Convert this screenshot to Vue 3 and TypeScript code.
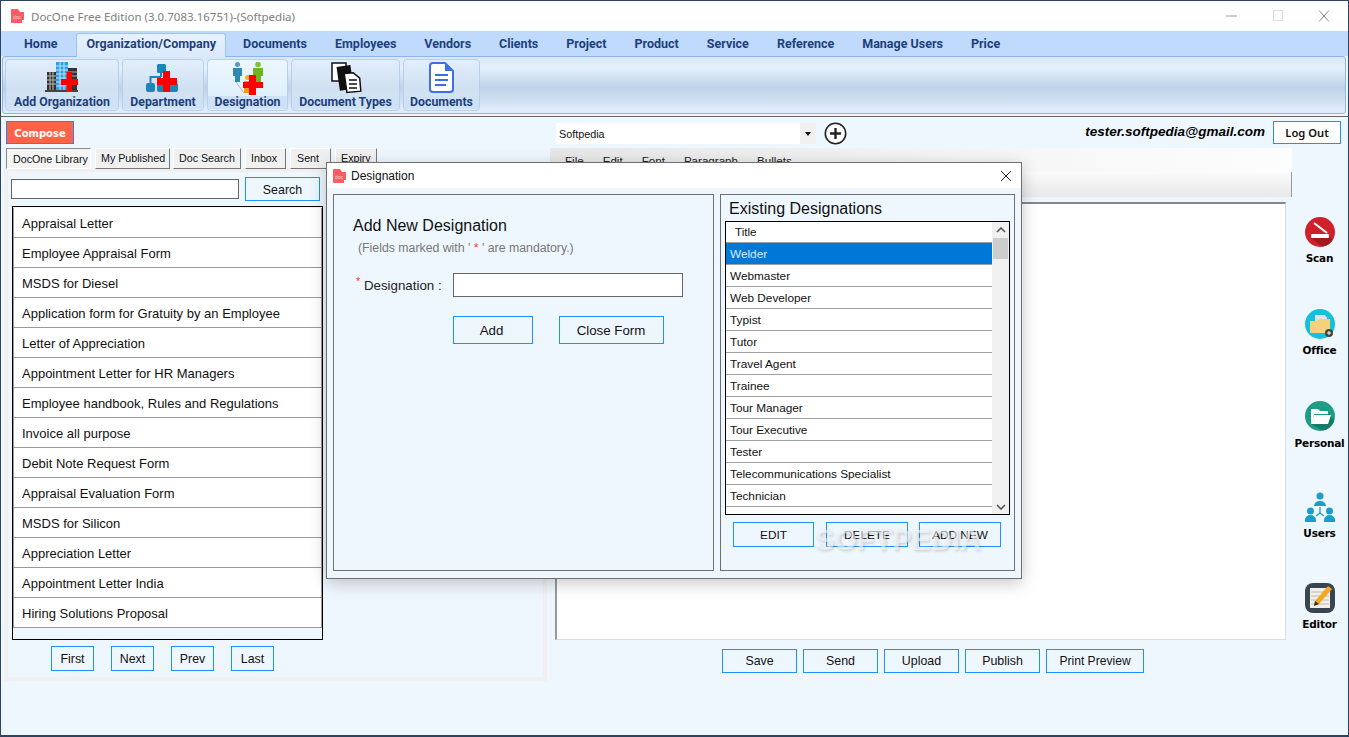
<script setup lang="ts">
const tabs = ['Home', 'Organization/Company', 'Documents', 'Employees', 'Vendors', 'Clients', 'Project', 'Product', 'Service', 'Reference', 'Manage Users', 'Price']
const libTabs = ['DocOne Library', 'My Published', 'Doc Search', 'Inbox', 'Sent', 'Expiry']
const docs = ['Appraisal Letter', 'Employee Appraisal Form', 'MSDS for Diesel', 'Application form for Gratuity by an Employee', 'Letter of Appreciation', 'Appointment Letter for HR Managers', 'Employee handbook, Rules and Regulations', 'Invoice all purpose', 'Debit Note Request Form', 'Appraisal Evaluation Form', 'MSDS for Silicon', 'Appreciation Letter', 'Appointment Letter India', 'Hiring Solutions Proposal']
const pager = ['First', 'Next', 'Prev', 'Last']
const actions = ['Save', 'Send', 'Upload', 'Publish', 'Print Preview']
const menus = ['File', 'Edit', 'Font', 'Paragraph', 'Bullets']
const titles = ['Welder', 'Webmaster', 'Web Developer', 'Typist', 'Tutor', 'Travel Agent', 'Trainee', 'Tour Manager', 'Tour Executive', 'Tester', 'Telecommunications Specialist', 'Technician', 'Technical Support Engineer']
</script>

<template>
  <div class="window">
    <header class="titlebar">
      <svg class="logo" viewBox="0 0 16 16"><path d="M3 1h6l2 3h4v8H13v3H3a1 1 0 0 1-1-1V2a1 1 0 0 1 1-1z" fill="#fb5c63" /><text x="4" y="10.5" font-size="5" fill="#ffd5d5" font-family="Liberation Sans">doc</text></svg>
      <span class="app-title">DocOne Free Edition (3.0.7083.16751)-(Softpedia)</span>
      <div class="win-controls">
        <svg width="12" height="12" viewBox="0 0 12 12"><path d="M0 6h11" stroke="#999" fill="none" /></svg>
        <svg width="12" height="12" viewBox="0 0 12 12"><rect x="1.5" y="0.5" width="9" height="10" stroke="#ddd" fill="none" /></svg>
        <svg width="12" height="12" viewBox="0 0 12 12"><path d="M1 0.5l10 11M11 0.5l-10 11" stroke="#888" fill="none" /></svg>
      </div>
    </header>

    <nav class="tabs">
      <span v-for="(t, i) in tabs" :key="t" class="tab" :class="{ active: i === 1 }">{{ t }}</span>
    </nav>

    <section class="ribbon">
      <button class="rb w114">
        <svg width="34" height="34" viewBox="0 0 34 34">
          <rect x="2" y="10" width="9" height="18" fill="#333" /><path d="M2 14h9M2 18h9M2 22h9M5 10v18M8 10v18" stroke="#bbb" />
          <rect x="23" y="6" width="9" height="22" fill="#333" /><path d="M23 10h9M23 14h9" stroke="#aaa" />
          <rect x="11" y="0" width="12" height="28" fill="#2c9fe8" /><path d="M11 4h12M11 8h12M11 12h12M11 16h12M11 20h12M11 24h12M15 0v28M19 0v28" stroke="#bfe4fb" />
          <rect x="0" y="28" width="33" height="2" fill="#444" />
          <path d="M21.500 10H27v7h6v6h-6v7h-5.500v-7H16v-6h5.500z" fill="#f00" />
        </svg>
        <span>Add Organization</span>
      </button>
      <button class="rb w82">
        <svg width="34" height="34" viewBox="0 0 34 34">
          <rect x="11" y="2" width="9" height="9" rx="1.500" fill="#1b86b8" />
          <path d="M15 10v5M4.500 22v-7H15" stroke="#1b86b8" stroke-width="2" fill="none" />
          <rect x="0" y="21" width="9" height="9" rx="2" fill="#1b86b8" /><rect x="11" y="21" width="10" height="9" rx="2" fill="#1b86b8" /><rect x="22" y="21" width="10" height="9" rx="2" fill="#1b86b8" />
          <path d="M17 9h7v7h7v7h-7v7h-7v-7h-6v-7h6z" fill="#f00" />
        </svg>
        <span>Department</span>
      </button>
      <button class="rb w81 hover">
        <svg width="34" height="34" viewBox="0 0 34 34">
          <circle cx="6.500" cy="2.500" r="2.500" fill="#4a9cc0" /><path d="M2 6h9v8H9v6H4v-6H2z" fill="#2d88b2" />
          <circle cx="27" cy="2.500" r="2.800" fill="#7dc22f" /><path d="M22 6h10v8h-2v6h-6v-6h-2z" fill="#6cb522" />
          <circle cx="16.500" cy="15.500" r="2.500" fill="#f5b51a" /><path d="M13 19h7v12h-7z" fill="#f39a16" />
          <path d="M5 20l8 11" stroke="#bbb" fill="none" />
          <path d="M18 13h7v7h7v6h-7v7h-7v-7h-6v-6h6z" fill="#f00" />
        </svg>
        <span>Designation</span>
      </button>
      <button class="rb w109">
        <svg width="34" height="34" viewBox="0 0 34 34">
          <rect x="3" y="1" width="14" height="18" fill="#fff" stroke="#111" stroke-width="1.500" />
          <rect x="9" y="4" width="14" height="24" fill="#111" transform="rotate(-8 15 15)" />
          <path d="M16 11h9l6 6v13H17z" fill="#fff" stroke="#111" stroke-width="1.500" transform="rotate(-5 22 20)" />
          <path d="M20 18h8M20 22h8M20 26h8" stroke="#111" stroke-width="1.500" />
        </svg>
        <span>Document Types</span>
      </button>
      <button class="rb w77">
        <svg width="34" height="34" viewBox="0 0 34 34">
          <path d="M8 1h12l8 8v18a3 3 0 0 1-3 3H8a3 3 0 0 1-3-3V4a3 3 0 0 1 3-3z" fill="#fff" stroke="#3e6fe3" stroke-width="2" />
          <path d="M20 1v8h8z" fill="#3e6fe3" />
          <path d="M10 13h13M10 18h13M10 23h11" stroke="#3e6fe3" stroke-width="2.200" />
        </svg>
        <span>Documents</span>
      </button>
    </section>

    <main class="body">
      <aside class="left">
        <button class="compose">Compose</button>
        <div class="lib-tabs">
          <span v-for="(t, i) in libTabs" :key="t" class="lib-tab" :class="{ on: i === 0 }">{{ t }}</span>
        </div>
        <div class="lib-panel">
          <div class="search-row">
            <input class="search-input" type="text" />
            <button class="btn search-btn">Search</button>
          </div>
          <ul class="doc-list">
            <li v-for="d in docs" :key="d">{{ d }}</li>
          </ul>
          <div class="pager">
            <button v-for="p in pager" :key="p" class="btn page-btn">{{ p }}</button>
          </div>
        </div>
      </aside>

      <div class="main">
        <div class="top-row">
          <div class="combo"><span>Softpedia</span><i class="combo-arrow"></i></div>
          <svg class="add-circle" width="23" height="23" viewBox="0 0 23 23"><circle cx="11.500" cy="11.500" r="10.200" fill="#fff" stroke="#222" stroke-width="1.600" /><path d="M11.500 6v11M6 11.500h11" stroke="#222" stroke-width="2.400" /></svg>
          <span class="email">tester.softpedia@gmail.com</span>
          <button class="btn logout">Log Out</button>
        </div>
        <div class="work">
          <div class="editor">
            <div class="menu-row"><span v-for="m in menus" :key="m">{{ m }}</span></div>
            <div class="tool-row"></div>
            <div class="sheet"></div>
            <div class="actions">
              <button v-for="a in actions" :key="a" class="btn act" :class="{ wide: a === 'Print Preview' }">{{ a }}</button>
            </div>
          </div>
          <div class="rail">
            <div class="rail-item">
              <svg width="32" height="32" viewBox="0 0 32 32"><defs><clipPath id="c1"><circle cx="16" cy="16" r="15" /></clipPath></defs><circle cx="16" cy="16" r="15" fill="#d0202a" /><path d="M7 22l4-2 14 0 8 8-8 8z" fill="#a5181f" clip-path="url(#c1)" /><path d="M10 7l13 10" stroke="#fff" stroke-width="2" /><rect x="7" y="18" width="18" height="4" rx="1" fill="#fff" /></svg>
              <span>Scan</span>
            </div>
            <div class="rail-item">
              <svg width="32" height="32" viewBox="0 0 32 32"><circle cx="16" cy="16" r="15" fill="#15c0da" /><path d="M11 7h10l2 3v8H11z" fill="#e3e3e3" /><path d="M6 13h6l2-2h12v14H6z" fill="#f4d27a" /><circle cx="25" cy="25" r="4" fill="#444" /><path d="M25 23v4M23 25h4" stroke="#fff" /></svg>
              <span>Office</span>
            </div>
            <div class="rail-item">
              <svg width="32" height="32" viewBox="0 0 32 32"><defs><clipPath id="c3"><circle cx="16" cy="16" r="15" /></clipPath></defs><circle cx="16" cy="16" r="15" fill="#1d9d86" /><path d="M7 24l18-10 8 10-8 10z" fill="#167a68" clip-path="url(#c3)" /><path d="M7 12V9h7l2 2h8v3H10l-2 9-1-1z" fill="#fff" /><path d="M10 15h17l-3 9H7z" fill="#fff" /></svg>
              <span>Personal</span>
            </div>
            <div class="rail-item">
              <svg width="32" height="32" viewBox="0 0 32 32" fill="#1a9fc4"><circle cx="16" cy="5" r="3.500" /><path d="M10 15a6 5 0 0 1 12 0z" /><circle cx="6.500" cy="20" r="3.500" /><path d="M1 31v-2a5.500 5 0 0 1 11 0v2z" /><circle cx="25.500" cy="20" r="3.500" /><path d="M20 31v-2a5.500 5 0 0 1 11 0v2z" /><path d="M16 16v6M16 22l-4 3M16 22l4 3" stroke="#1a9fc4" fill="none" stroke-width="1.300" /></svg>
              <span>Users</span>
            </div>
            <div class="rail-item">
              <svg width="32" height="32" viewBox="0 0 32 32"><rect x="1" y="1" width="30" height="30" rx="8" fill="#3a4450" /><rect x="6" y="6" width="20" height="20" fill="#f1efe6" /><path d="M7 10h18M7 14h18M7 18h18M7 22h18" stroke="#bbb" /><path d="M24 4l4 3-13 15-5 2 1-5z" fill="#f5a623" /><path d="M11 19l4 3-5 2z" fill="#333" /></svg>
              <span>Editor</span>
            </div>
          </div>
        </div>
      </div>
    </main>

    <div class="dialog">
      <header class="dlg-title">
        <svg class="logo small" viewBox="0 0 16 16"><path d="M3 1h6l2 3h4v8H13v3H3a1 1 0 0 1-1-1V2a1 1 0 0 1 1-1z" fill="#fb5c63" /><text x="4" y="10.5" font-size="5" fill="#ffd5d5" font-family="Liberation Sans">doc</text></svg>
        <span>Designation</span>
        <svg class="dlg-close" width="12" height="12" viewBox="0 0 12 12"><path d="M1 1l10 10M11 1L1 11" stroke="#222" fill="none" /></svg>
      </header>
      <div class="dlg-body">
        <section class="dlg-left">
          <h2>Add New Designation</h2>
          <p class="note">(Fields marked with ' <b>*</b> ' are mandatory.)</p>
          <div class="field">
            <label><sup>*</sup> Designation :</label>
            <input type="text" />
          </div>
          <div class="form-btns">
            <button class="btn add">Add</button>
            <button class="btn close">Close Form</button>
          </div>
        </section>
        <section class="dlg-right">
          <h2>Existing Designations</h2>
          <div class="grid">
            <div class="grid-rows">
              <div class="grid-head">Title</div>
              <div v-for="(t, i) in titles" :key="t" class="grid-row" :class="{ sel: i === 0 }">{{ t }}</div>
            </div>
            <div class="scroll">
              <svg width="10" height="6" viewBox="0 0 10 6"><path d="M1 5l4-4 4 4" stroke="#555" stroke-width="1.600" fill="none" /></svg>
              <i class="thumb"></i>
              <svg class="down" width="10" height="6" viewBox="0 0 10 6"><path d="M1 1l4 4 4-4" stroke="#555" stroke-width="1.600" fill="none" /></svg>
            </div>
          </div>
          <div class="grid-btns">
            <button class="btn">EDIT</button>
            <button class="btn">DELETE</button>
            <button class="btn">ADD NEW</button>
          </div>
        </section>
      </div>
    </div>
    <div class="watermark">SOFTPEDIA</div>
  </div>
</template>

<style>
html, body { margin: 0; background: #eff7fe; }
</style>

<style scoped>
* { box-sizing: border-box; }
.window {
  position: relative; width: 1349px; height: 737px; border: 1px solid #2b4464; border-bottom-width: 2px;
  display: flex; flex-direction: column; background: #eff7fe; overflow: hidden;
  font-family: "Liberation Sans", Arial, sans-serif; color: #111;
}
button { font-family: inherit; padding: 0; cursor: default; }
.titlebar { height: 30px; background: #fff; display: flex; align-items: center; padding-left: 8px; flex: none; }
.logo { width: 16px; height: 16px; }
.logo.small { width: 16px; height: 16px; }
.app-title { margin-left: 6px; font-size: 11.500px; color: #808080; font-family: "Noto Sans", sans-serif; }
.win-controls { margin-left: auto; display: flex; gap: 34px; padding-right: 18px; }
.tabs { height: 25px; background: #bfdafc; display: flex; flex: none; padding: 2px 0 0 9px; align-items: stretch; }
.tab { padding: 3px 14px 0; font: 700 12.500px Roboto, sans-serif; color: #1e3f7c; white-space: nowrap; }
.tab.active {
  background: linear-gradient(#e8f2fe, #dbe9fb); border: 1px solid #9fc3ee; border-bottom: 0; border-radius: 3px 3px 0 0;
  padding: 2px 9px 0; margin: 0 3px 0 5px; height: 24px; position: relative;
}
.ribbon {
  height: 58px; margin: 0 2px 0 1px; flex: none; display: flex; gap: 3px; padding: 2px 0 2px 2px;
  border: 1px solid #8fb4ea; border-radius: 3px;
  background: linear-gradient(#d7e7fb 0, #e5f0fd 20%, #bed2e8 55%, #dfecfb 95%);
}
.rb {
  height: 52px; border: 1px solid #b9d0ea; border-radius: 4px; display: flex; flex-direction: column; align-items: center;
  background: linear-gradient(#e3eefb 0, #cfe0f2 60%, #dfebf8 100%); justify-content: space-between; overflow: hidden;
}
.rb.hover { background: linear-gradient(#ecf6fe, #dbeefa); }
.rb svg { margin-top: 2px; flex: none; }
.rb span { display: block; width: 100%; height: 15px; margin-bottom: 1px; background: #cfe1f4; font: 700 12.300px/13px Roboto, sans-serif; color: #1e3f7c; white-space: nowrap; text-align: center; }
.w114 { width: 114px; } .w82 { width: 82px; } .w81 { width: 81px; } .w109 { width: 109px; } .w77 { width: 77px; }
.body { flex: 1; display: flex; min-height: 0; margin-top: 2px; border-top: 1px solid #666; }
.left { width: 546px; flex: none; padding: 4px 0 0 5px; }
.compose { display: block; width: 68px; height: 23px; border: 1px solid #1e8cf0; background: #ff6347; color: #fff; font: 700 10px "DejaVu Sans", sans-serif; padding-top: 1px; }
.lib-tabs { display: flex; gap: 4px; margin-top: 4px; height: 21px; position: relative; }
.lib-tab {
  background: #f0f0f0; height: 21px; padding: 0 5px; font-size: 10.700px; line-height: 19px; white-space: nowrap;
  border: 1px solid; border-color: #fff #777 #777 #fff;
}
.lib-tab:nth-child(1) { width: 85px; background: #f4f4f4; border-color: #888 #fff #fff #888; padding-left: 6px; line-height: 20px; }
.lib-tab:nth-child(2) { width: 75px; margin-left: 0; } .lib-tab:nth-child(3) { width: 68px; margin-left: -1px; }
.lib-tab:nth-child(4) { width: 41px; } .lib-tab:nth-child(5) { width: 41px; padding-left: 6px; } .lib-tab:nth-child(6) { width: 42px; }
.lib-panel { margin: -1px 0 0 -2px; width: 543px; height: 513px; border: 4px solid #f0f0f0; padding: 5px 3px 0; }
.search-row { display: flex; align-items: center; gap: 6px; }
.search-input { width: 228px; height: 20px; border: 1px solid #666; background: #fff; }
.search-btn { width: 75px; height: 24px; font-size: 12.300px; padding-top: 1px; }
.btn { background: transparent; border: 1px solid #1e90ff; color: #111; font-size: 12.400px; }
.doc-list { list-style: none; margin: 5px 0 0 1px; padding: 1px 0 0; width: 311px; height: 434px; border: 1px solid #000; overflow: hidden; }
.doc-list li { height: 30px; line-height: 31px; background: #fff; border-bottom: 1px solid #999; font-size: 13px; white-space: nowrap; border-left: 1px solid #999; border-right: 1px solid #999; padding-left: 8px; }
.pager { display: flex; gap: 17px; margin: 6px 0 0 40px; }
.page-btn { width: 43px; height: 25px; padding-top: 1px; }
.main { flex: 1; min-width: 0; display: flex; flex-direction: column; }
.top-row { height: 30px; flex: none; display: flex; align-items: flex-start; padding: 6px 7px 0 9px; }
.combo { width: 260px; height: 21px; background: #fff; display: flex; align-items: center; justify-content: space-between; font-size: 10.800px; padding-left: 3px; }
.combo-arrow { width: 16px; height: 21px; background: #f0f0f0; position: relative; }
.combo-arrow::after { content: ""; position: absolute; left: 5px; top: 9px; border: 3px solid transparent; border-top: 4px solid #111; border-bottom: 0; }
.add-circle { margin: -1px 0 0 8px; flex: none; }
.email { margin-left: auto; font: italic 700 13.500px "Liberation Sans", sans-serif; color: #000; margin-top: 1px; }
.logout { width: 68px; height: 23px; margin: -2px 0 0 8px; font-size: 11.200px; background: #fff; font-family: "Noto Sans", sans-serif; font-weight: 600; }
.work { flex: 1; display: flex; min-height: 0; padding-top: 1px; }
.editor { width: 745px; flex: none; padding-left: 3px; display: flex; flex-direction: column; }
.menu-row { height: 24px; flex: none; background: linear-gradient(90deg, #e7e7e7, #f4f4f4 50%, #fdfdfd); display: flex; gap: 19px; padding: 6px 0 0 15px; font-size: 11.600px; color: #222; }
.tool-row { height: 25px; flex: none; background: linear-gradient(#fbfbfb, #e8e8e8); border-right: 1px solid #999; }
.sheet { width: 731px; height: 438px; margin: 5px 0 0 5px; flex: none; background: #fff; border: 1px solid #ddd; border-left: 2px solid #999; border-top: 2px solid #888; }
.actions { display: flex; gap: 6px; margin: 9px 0 0 172px; }
.act { width: 75px; height: 24px; }
.act.wide { width: 98px; font-size: 12.100px; }
.rail { flex: 1; padding: 68px 1px 0 0; }
.rail-item { height: 91.500px; display: flex; flex-direction: column; align-items: center; }
.rail-item svg { width: 32px; height: 32px; flex: none; }
.rail-item span { font: 700 10.500px "DejaVu Sans", sans-serif; color: #000; margin-top: 4px; letter-spacing: -0.200px; }
.rail-item:nth-child(3) { padding-top: 1px; }
.rail-item:nth-child(3) span { margin-top: 5px; }
.dialog {
  position: absolute; left: 325px; top: 161px; width: 696px; height: 417px; background: #eff7fe; border: 1px solid #6f6f6f;
  box-shadow: 0 4px 16px rgba(0, 0, 0, 0.22); display: flex; flex-direction: column; z-index: 5;
}
.dlg-title { height: 25px; background: #fff; flex: none; display: flex; align-items: center; padding-left: 4px; font-size: 12px; color: #111; }
.dlg-title span { margin-left: 4px; }
.dlg-close { margin-left: auto; margin-right: 9px; }
.dlg-body { flex: 1; display: flex; gap: 6px; padding: 6px 6px 7px; }
.dlg-left { width: 381px; border: 1px solid #707070; padding: 21px 0 0 19px; }
.dlg-left h2, .dlg-right h2 { margin: 0; font-size: 16px; font-weight: 400; line-height: 19px; color: #111; }
.note { margin: 6px 0 0 5px; font-size: 12.300px; line-height: 14px; color: #777; }
.note b { color: #f33; font-weight: 400; }
.field { display: flex; align-items: center; margin-top: 18px; }
.field label { width: 100px; padding-left: 3px; font-size: 13.300px; color: #222; white-space: nowrap; }
.field sup { color: #f33; font-size: 11px; line-height: 0; }
.field input { width: 230px; height: 24px; border: 1px solid #666; background: #fff; }
.form-btns { display: flex; gap: 26px; margin: 19px 0 0 100px; }
.add { width: 80px; height: 28px; font-size: 13.300px; padding-right: 3px; }
.close { width: 105px; height: 28px; font-size: 13.300px; padding-right: 1px; }
.dlg-right { flex: 1; border: 1px solid #707070; padding: 4px 4px 0; }
.dlg-right h2 { padding-left: 4px; }
.grid { width: 285px; height: 294px; margin-top: 3px; border: 1px solid #000; display: flex; overflow: hidden; background: #fff; }
.grid-rows { width: 266px; flex: none; }
.grid-head { height: 21px; line-height: 20px; padding-left: 9px; font-size: 11.600px; border-bottom: 1px solid #a0a0a0; }
.grid-row { height: 22px; line-height: 22px; padding-left: 4px; font-size: 11.800px; border-bottom: 1px solid #a0a0a0; white-space: nowrap; }
.grid-row.sel { background: #0078d7; color: #dbeeff; }
.scroll { flex: 1; background: #f0f0f0; position: relative; display: flex; flex-direction: column; align-items: center; padding-top: 5px; }
.thumb { display: block; width: 15px; height: 21px; background: #cdcdcd; margin-top: 5px; }
.down { position: absolute; bottom: 4px; left: 4px; }
.grid-btns { display: flex; gap: 12px; margin: 7px 0 0 8px; }
.grid-btns .btn { width: 81px; height: 25px; font-size: 11.800px; }
.grid-btns .btn:nth-child(2) { width: 82px; }
.grid-btns .btn:nth-child(3) { width: 82px; margin-left: -1px; }
.watermark {
  position: absolute; left: 814px; top: 523px; z-index: 6; font: 700 29px "Liberation Sans", sans-serif;
  color: rgba(255, 255, 255, 0.6); text-shadow: 1px 1px 3px rgba(0, 0, 0, 0.2); pointer-events: none;
}
</style>
